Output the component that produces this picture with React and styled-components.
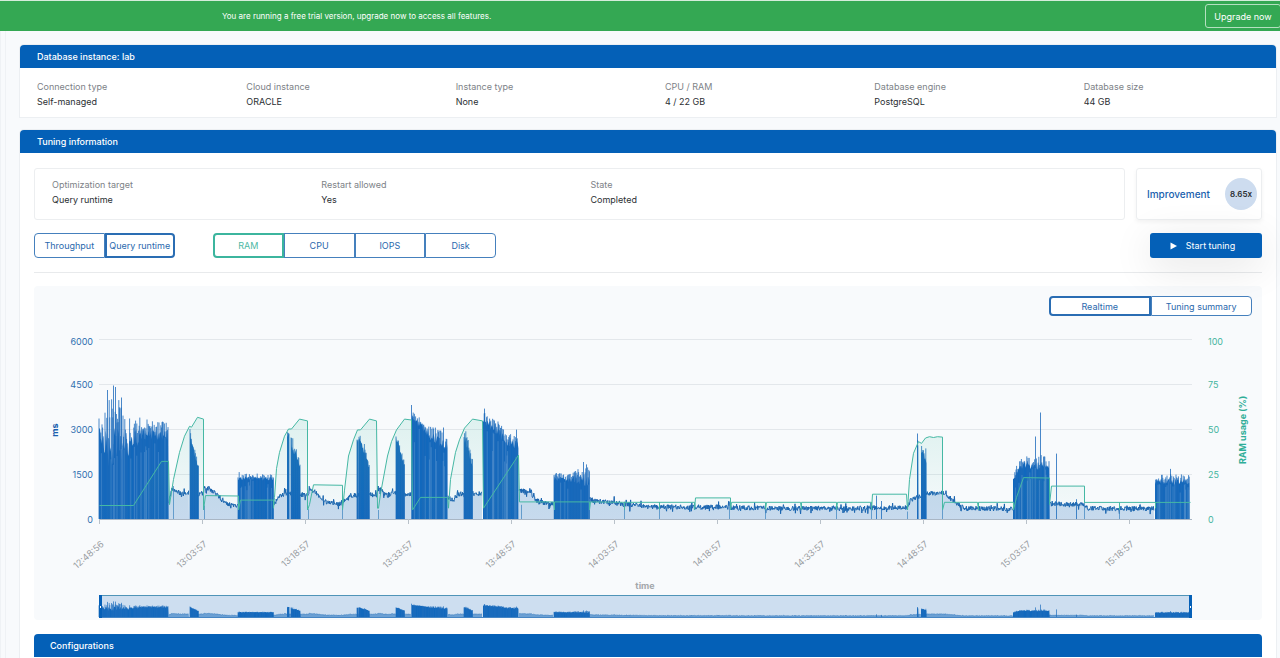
import React, { useState } from "react";

import styled, { createGlobalStyle } from "styled-components";

const instanceInfo = [
  ["Connection type", "Self-managed"],
  ["Cloud instance", "ORACLE"],
  ["Instance type", "None"],
  ["CPU / RAM", "4 / 22 GB"],
  ["Database engine", "PostgreSQL"],
  ["Database size", "44 GB"],
];

const tuningInfo = [
  ["Optimization target", "Query runtime"],
  ["Restart allowed", "Yes"],
  ["State", "Completed"],
];

const timeLabels = [
  "12:48:56",
  "13:03:57",
  "13:18:57",
  "13:33:57",
  "13:48:57",
  "14:03:57",
  "14:18:57",
  "14:33:57",
  "14:48:57",
  "15:03:57",
  "15:18:57",
];

// chart geometry
const LEFT = 99;
const RIGHT = 1192;
const BASE = 203;
const PLOT_HEIGHT = 180;
const BRUSH_TOP = 280;
const BRUSH_BASE = 301;

// calm parts of the run: [x, ms] points, each list is one continuous piece
const calm = [
  [[169, 600], [172, 1000], [177, 900], [181, 830], [189, 850]],
  [[198, 830], [203, 850], [204, 1080], [210, 1000], [218, 780], [228, 480], [238, 430]],
  [[273, 420], [277, 650], [281, 780], [287, 880]],
  [[289, 880], [291, 850]],
  [[300, 820], [308, 800], [309, 1020], [315, 900], [327, 530], [342, 500], [345, 650], [350, 780], [359, 800]],
  [[369, 800], [377, 820], [378, 1040], [384, 880], [388, 760], [393, 920], [396, 850]],
  [[404, 830], [411, 830]],
  [[448, 740], [452, 630], [460, 850], [464, 830]],
  [[472, 830], [482, 850]],
  [[519, 950], [530, 920], [536, 620], [545, 530], [553, 490]],
  [[589, 660], [600, 580], [620, 510], [640, 450], [652, 400], [729, 400], [732, 370], [840, 345], [870, 370], [907, 380], [911, 650], [917, 720]],
  [[918, 740], [921, 780]],
  [[926, 850], [942, 880], [950, 700], [960, 430], [966, 350], [1013, 340]],
  [[1049, 500], [1084, 490], [1088, 360], [1154, 340]],
];

// busy parts: points are [x, body ms, spike ms]
const bursts = [
  [[99, 2900, 3350], [104, 2600, 3250], [105, 2400, 4100], [109, 2400, 4100], [116, 2400, 4200], [119, 2500, 4000], [125, 2450, 3600], [132, 2500, 3500], [138, 2650, 3600], [142, 2850, 3350], [168, 2800, 3250]],
  [[190, 2800, 3050], [193, 2400, 2550], [198, 1750, 1900]],
  [[238, 1370, 1600], [241, 1350, 1520], [273, 1350, 1520]],
  [[287, 2800, 3000], [289, 2800, 3000]],
  [[291, 2500, 2850], [295, 2200, 2500], [300, 1700, 1950]],
  [[357, 2600, 2750], [358, 2600, 2750]],
  [[359, 2700, 2850], [363, 2400, 2700], [369, 1700, 1850]],
  [[396, 2700, 2850], [400, 2300, 2500], [404, 1800, 2000]],
  [[412, 3350, 3750], [415, 3250, 3500], [425, 3000, 3400], [432, 2700, 3150], [447, 2450, 2850]],
  [[464, 2700, 3100], [467, 2500, 2850], [472, 1800, 2000]],
  [[483, 3300, 3650], [486, 3200, 3450], [497, 2950, 3300], [507, 2550, 2900], [518, 2450, 2850]],
  [[554, 1350, 1550], [570, 1300, 1500], [580, 1300, 1750], [589, 1300, 1850]],
  [[917, 2400, 2800], [918, 2400, 2700]],
  [[921, 2300, 2650], [923, 2150, 2450], [926, 2000, 2400]],
  [[1013, 1280, 1400], [1017, 1550, 1850], [1024, 1800, 2150], [1049, 1780, 2150]],
  [[1155, 1250, 1450], [1170, 1250, 1500], [1189, 1250, 1480]],
];

const peaks = [
  [107, 4300], [113, 4450], [115, 4400], [121, 4050], [411, 3800], [484, 3680],
  [443, 3050], [516, 2980], [583, 1900], [586, 1820], [917, 2850], [1035, 2750],
  [1040, 3550], [1056, 2180], [1170, 1670], [876, 780], [881, 600], [1076, 660],
];

const drops = [173, 204, 308, 342, 378, 521, 624, 659, 729, 765, 836, 871, 907, 942, 1084, 1119];

// [x, percent]
const ram = [
  [99, 7.5], [133, 7.5], [161, 32], [168, 32], [169, 8], [173, 22], [179, 37], [184, 46],
  [189, 51.5], [191, 51], [197, 56.5], [203, 55.5], [203, 5], [205, 13], [238, 12.8],
  [238, 5], [240, 10.5], [273, 10.5], [273, 6], [274, 12], [276, 28], [279, 37],
  [284, 46], [288, 50], [291, 50], [299, 55.5], [307, 54.5], [307, 5], [309, 8],
  [313, 19], [342, 18.7], [342, 5], [344, 16], [348, 35], [353, 44], [357, 49.5],
  [360, 49.5], [369, 55.5], [376, 54.5], [377, 6], [378, 6], [380, 14], [387, 35],
  [391, 43], [396, 49.5], [404, 55.5], [411, 55], [412, 5], [420, 12], [447, 12],
  [448, 6], [450, 22], [455, 37], [459, 44], [464, 50.5], [472, 55.5], [482, 54.5],
  [483, 6], [518, 35.5], [519, 9.5], [553, 9.5], [554, 5], [554, 9.5], [589, 9.5],
  [589, 5], [590, 9.5], [624, 9.3], [624, 5], [624, 9.3], [659, 9.3], [659, 5],
  [659, 9.3], [694, 9.3], [694, 5], [695, 11.7], [730, 11.7], [730, 5], [731, 9.3],
  [765, 9.3], [765, 5], [766, 9.3], [800, 9.3], [801, 5], [801, 9.3], [836, 9.3],
  [836, 5], [837, 9.3], [871, 9.3], [871, 5], [872, 13.8], [906, 13.8], [907, 5],
  [909, 22], [913, 36.5], [918, 43], [921, 42], [925, 45], [929, 45.7], [933, 45.3],
  [937, 45.7], [942, 45.5], [942, 5], [944, 9.3], [977, 9.3], [978, 5], [978, 9.3],
  [1013, 9.3], [1013, 5], [1016, 12], [1023, 23], [1049, 22.8], [1049, 8],
  [1051, 18.3], [1084, 18.3], [1084, 9.2], [1119, 9.2], [1119, 5], [1119, 9.2],
  [1155, 9.2], [1155, 6], [1155, 9.2], [1190, 9.2],
];

// seeded so that every render draws the same samples
const createRandom = (seed) => {
  let value = seed;
  return () => {
    value = (value * 16807) % 2147483647;
    return value / 2147483647;
  };
};

const valueAt = (points, x, index) => {
  for (let i = 1; i < points.length; i++) {
    const a = points[i - 1];
    const b = points[i];
    if (x <= b[0]) {
      const part = (x - a[0]) / (b[0] - a[0] || 1);
      return a[index] + (b[index] - a[index]) * part;
    }
  }
  return points[points.length - 1][index];
};

const buildSeries = (base, height) => {
  const random = createRandom(4711);
  const y = (ms) => (base - (ms / 6000) * height).toFixed(1);
  let area = "";
  let line = "";
  let body = "";
  let spikes = "";
  let gaps = "";

  calm.forEach((points) => {
    const start = points[0][0];
    const end = points[points.length - 1][0];
    let path = "";
    for (let x = start; x <= end; x += 0.4) {
      let noise = (random() - 0.5) * 160;
      if (random() > 0.9) noise *= x > 589 && x < 640 ? 3.2 : 2.4;
      path += `${path ? "L" : "M"}${x.toFixed(1)} ${y(valueAt(points, x, 1) + noise)}`;
    }
    line += path;
    area += `${path}L${end} ${base}L${start} ${base}Z`;
  });

  bursts.forEach((points) => {
    const start = points[0][0];
    const end = points[points.length - 1][0] + 0.5;
    body += `M${start} ${base}`;
    for (let x = start; x <= end; x += 0.6) {
      const low = valueAt(points, x, 1);
      const high = valueAt(points, x, 2);
      body += `L${x.toFixed(1)} ${y(low + (random() - 0.5) * (high - low) * 0.8)}`;
      if (random() > 0.4) {
        const top = low + (high - low) * Math.pow(random(), 0.8);
        spikes += `M${x.toFixed(1)} ${base}V${y(top)}`;
      }
      if (end - start > 20 && random() > 0.8) {
        gaps += `M${x.toFixed(1)} ${base}V${y(low * (0.7 + random() * 0.3))}`;
      }
    }
    body += `L${end} ${base}Z`;
  });

  peaks.forEach(([x, ms]) => {
    spikes += `M${x + 0.5} ${base}V${y(ms)}`;
  });

  const dropLines = drops.map((x) => `M${x + 0.5} ${base}V${y(valueAt(ram, x, 1) * 50)}`).join("");

  return { area, line, body, spikes, gaps, dropLines };
};

const main = buildSeries(BASE, PLOT_HEIGHT);
const mini = buildSeries(BRUSH_BASE, 21);

const ramLine = ram
  .map(([x, value], i) => `${i ? "L" : "M"}${x + 0.5} ${(BASE - value * 1.8).toFixed(1)}`)
  .join("");

const Chart = () => (
  <ChartSvg viewBox="34 0 1228 304" role="img" aria-label="Query runtime and RAM usage">
    <defs>
      <linearGradient id="ramFill" x1="0" y1="0" x2="0" y2="1">
        <stop offset="0" stopColor="#3cb9a0" stopOpacity="0.14" />
        <stop offset="1" stopColor="#3cb9a0" stopOpacity="0.01" />
      </linearGradient>
    </defs>

    {[0, 1, 2, 3, 4].map((step) => {
      const y = BASE - step * 45;
      return (
        <g key={step}>
          <line x1={LEFT} x2={RIGHT} y1={y + 0.5} y2={y + 0.5} stroke="#e3e7eb" />
          <AxisText x="93" y={step === 4 ? y + 6 : y + 4} textAnchor="end">
            {step * 1500}
          </AxisText>
          <AxisText x="1208" y={step === 4 ? y + 6 : y + 4} $green>
            {step * 25}
          </AxisText>
        </g>
      );
    })}

    <path d={main.area} fill="#c8daee" />
    <path d={main.line} fill="none" stroke="#1a64b0" strokeWidth="1" />
    <path d={main.body} fill="#1168bd" />
    <path d={main.spikes} stroke="#1c6abb" strokeWidth="0.8" />
    <path d={main.gaps} stroke="#8fb9e2" strokeWidth="0.3" />
    <path d={main.dropLines} stroke="#4a8bc4" strokeWidth="0.8" />
    <path d={`${ramLine}V${BASE}H${LEFT}Z`} fill="url(#ramFill)" />
    <path d={ramLine} fill="none" stroke="#45b8a4" strokeWidth="1" />

    <line x1={LEFT} x2={RIGHT} y1={BASE + 0.5} y2={BASE + 0.5} stroke="#a9b6c4" />
    {timeLabels.map((label, i) => {
      const x = LEFT + 0.5 + i * 103;
      return (
        <g key={label}>
          <line x1={x} x2={x} y1={BASE} y2={BASE + 5} stroke="#b9c1c9" />
          <TimeText textAnchor="end" transform={`translate(${x + 5} 229) rotate(-41)`}>
            {label}
          </TimeText>
        </g>
      );
    })}

    <AxisTitle textAnchor="middle" transform="translate(58 114) rotate(-90)">
      ms
    </AxisTitle>
    <AxisTitle textAnchor="middle" transform="translate(1246 114) rotate(-90)" $color="#2fae98">
      RAM usage (%)
    </AxisTitle>
    <AxisTitle x="645" y="273" textAnchor="middle" $color="#a3a7ab">
      time
    </AxisTitle>

    <rect x={LEFT} y={BRUSH_TOP} width={RIGHT - LEFT} height="22" fill="#cddef0" />
    <path d={mini.area} fill="#6a9fd3" />
    <path d={mini.line} fill="none" stroke="#2b73b8" strokeWidth="0.5" />
    <path d={mini.body} fill="#1168bd" />
    <path d={mini.spikes} stroke="#1c6dbd" strokeWidth="0.7" />
    <line x1={LEFT} x2={RIGHT} y1={BRUSH_TOP - 0.5} y2={BRUSH_TOP - 0.5} stroke="#4f94b8" />
    <line x1={LEFT} x2={RIGHT} y1={BRUSH_BASE + 0.5} y2={BRUSH_BASE + 0.5} stroke="#4585c4" />
    {[LEFT, RIGHT - 3].map((x) => (
      <g key={x}>
        <rect x={x} y={BRUSH_TOP - 1} width="3" height="23" fill="#0660b7" />
        <rect x={x + 1} y={BRUSH_TOP + 10} width="1" height="2" fill="#ffffff" />
      </g>
    ))}
  </ChartSvg>
);

const Toggle = ({ options, value, onChange, label, ...rest }) => (
  <ToggleGroup role="group" aria-label={label} {...rest}>
    {options.map((option) => (
      <ToggleButton
        key={option}
        type="button"
        aria-pressed={option === value}
        $active={option === value}
        $green={option === "RAM" && option === value}
        onClick={() => onChange(option)}
      >
        {option}
      </ToggleButton>
    ))}
  </ToggleGroup>
);

const Info = ({ items }) =>
  items.map(([label, value]) => (
    <InfoItem key={label}>
      <dt>{label}</dt>
      <dd>{value}</dd>
    </InfoItem>
  ));

const App = () => {
  const [target, setTarget] = useState("Query runtime");
  const [metric, setMetric] = useState("RAM");
  const [view, setView] = useState("Realtime");

  return (
    <>
      <GlobalStyle />
      <Page>
        <Banner>
          <p>You are running a free trial version, upgrade now to access all features.</p>
          <UpgradeButton type="button">Upgrade now</UpgradeButton>
        </Banner>
        <Content>
          <Rail />
          <Main>
            <Panel>
              <PanelTitle>Database instance: lab</PanelTitle>
              <InstanceInfo>
                <Info items={instanceInfo} />
              </InstanceInfo>
            </Panel>
            <Panel $grow>
              <PanelTitle>Tuning information</PanelTitle>
              <TuningBody>
                <Summary>
                  <TuningInfo>
                    <Info items={tuningInfo} />
                  </TuningInfo>
                  <Improvement>
                    <span>Improvement</span>
                    <Score>8.65x</Score>
                  </Improvement>
                </Summary>
                <Toolbar>
                  <Toggle
                    label="Target"
                    options={["Throughput", "Query runtime"]}
                    value={target}
                    onChange={setTarget}
                    $width={141}
                  />
                  <Toggle
                    label="Metric"
                    options={["RAM", "CPU", "IOPS", "Disk"]}
                    value={metric}
                    onChange={setMetric}
                    $width={283}
                  />
                  <StartButton type="button">
                    <svg width="7" height="8" viewBox="0 0 7 8" aria-hidden="true">
                      <path d="M0.5 0.5L7 4L0.5 7.5Z" fill="#ffffff" />
                    </svg>
                    Start tuning
                  </StartButton>
                </Toolbar>
                <ChartPanel>
                  <ChartToolbar>
                    <Toggle
                      label="View"
                      options={["Realtime", "Tuning summary"]}
                      value={view}
                      onChange={setView}
                      $width={203}
                      $small
                    />
                  </ChartToolbar>
                  <Chart />
                </ChartPanel>
                <PanelTitle $inset>Configurations</PanelTitle>
              </TuningBody>
            </Panel>
          </Main>
        </Content>
      </Page>
    </>
  );
};

export default App;

const GlobalStyle = createGlobalStyle`
  * {
    box-sizing: border-box;
  }

  body {
    margin: 0;
    background-color: #f8fafc;
    color: #2b2f33;
    font-family: Inter, "Liberation Sans", sans-serif;
    font-size: 9px;
    line-height: 15px;
  }

  h2, p, dl, dd {
    margin: 0;
  }

  button {
    padding: 0;
    font-family: inherit;
    font-size: 9px;
    cursor: pointer;
  }
`;

const Page = styled.div`
  display: flex;
  flex-direction: column;
  min-height: 100vh;
  overflow: hidden;
`;

const Banner = styled.div`
  display: flex;
  align-items: center;
  justify-content: space-between;
  height: 31px;
  padding-left: 222px;
  border-top: 1px solid #d5eddb;
  background-color: #34a853;
  color: #ffffff;
  font-size: 8px;
`;

const UpgradeButton = styled.button`
  width: 76px;
  height: 24px;
  margin-right: -1px;
  border: 1px solid #b5e0c0;
  border-radius: 3px;
  background-color: transparent;
  color: #ffffff;
`;

const Content = styled.div`
  display: flex;
  flex: 1;
`;

const Rail = styled.div`
  width: 6px;
  border-left: 1px solid #eff2f5;
  border-right: 1px solid #eff2f5;
`;

const Main = styled.main`
  display: flex;
  flex-direction: column;
  flex: 1;
  gap: 13px;
  padding: 14px 4px 0 14px;
`;

const Panel = styled.section`
  flex: ${(props) => (props.$grow ? "1" : "none")};
  border-radius: 4px 4px 0 0;
  background-color: #ffffff;
  box-shadow: 0 0 0 1px #eceff2;
`;

const PanelTitle = styled.h2`
  height: 23px;
  padding: 0 ${(props) => (props.$inset ? "16px" : "17px")};
  border-radius: 4px 4px 0 0;
  background-color: #0460b7;
  color: #ffffff;
  font-size: 9px;
  font-weight: 500;
  line-height: 23px;
`;

const InstanceInfo = styled.dl`
  display: grid;
  grid-template-columns: repeat(6, 1fr);
  padding: 11px 0 8px;
`;

const InfoItem = styled.div`
  padding-left: 17px;

  dt {
    color: #7d8287;
  }
`;

const TuningBody = styled.div`
  padding: 15px 14px 0;
`;

const Summary = styled.div`
  display: flex;
  gap: 11px;
`;

const TuningInfo = styled.dl`
  display: grid;
  grid-template-columns: repeat(4, 1fr);
  flex: 1;
  height: 52px;
  padding: 8px 12px 0 0;
  border: 1px solid #eceef0;
  border-radius: 3px;
`;

const Improvement = styled.div`
  display: flex;
  align-items: center;
  justify-content: space-between;
  width: 126px;
  padding: 0 4px 0 10px;
  border: 1px solid #eceef0;
  border-radius: 3px;
  box-shadow: 0 2px 4px rgba(0, 0, 0, 0.05);
  color: #1a5fae;
  font-size: 10px;
  font-weight: 500;
`;

const Score = styled.strong`
  width: 32px;
  height: 32px;
  border-radius: 50%;
  background-color: #cddcef;
  color: #2b2f33;
  font-size: 8px;
  font-weight: 600;
  line-height: 32px;
  text-align: center;
`;

const Toolbar = styled.div`
  display: flex;
  gap: 38px;
  padding: 13px 0 14px;
  border-bottom: 1px solid #e8eaec;
`;

const ToggleGroup = styled.div`
  display: grid;
  grid-auto-flow: column;
  grid-auto-columns: 1fr;
  width: ${(props) => props.$width}px;
  height: ${(props) => (props.$small ? "20px" : "25px")};
`;

const ToggleButton = styled.button`
  min-width: 0;
  border: ${(props) => (props.$active ? "2px" : "1px")} solid
    ${(props) => (props.$green ? "#3cb59e" : props.$active ? "#2a6db3" : "#4580bd")};
  background-color: #ffffff;
  color: ${(props) => (props.$green ? "#4db8a4" : "#2a69ad")};
  white-space: nowrap;

  &:first-child {
    border-radius: 4px 0 0 4px;
  }

  &:last-child {
    border-radius: 0 4px 4px 0;
  }
`;

const StartButton = styled.button`
  display: flex;
  align-items: center;
  justify-content: center;
  gap: 9px;
  width: 112px;
  height: 25px;
  margin-left: auto;
  padding-right: 7px;
  border: 0;
  border-radius: 3px;
  background-color: #0460b7;
  box-shadow: 0 8px 40px rgba(0, 0, 0, 0.12);
  color: #ffffff;
`;

const ChartPanel = styled.div`
  margin: 13px 0 14px;
  border-radius: 4px;
  background-color: #f8fafc;
`;

const ChartToolbar = styled.div`
  display: flex;
  justify-content: flex-end;
  padding: 10px 10px 0;
`;

const ChartSvg = styled.svg`
  display: block;
  width: 100%;
  height: auto;
`;

const AxisText = styled.text`
  fill: ${(props) => (props.$green ? "#45b5a0" : "#2f6fb0")};
  font-size: 9px;
`;

const TimeText = styled.text`
  fill: #9a9ea3;
  font-size: 9px;
`;

const AxisTitle = styled.text`
  fill: ${(props) => props.$color || "#1a5fae"};
  font-size: 9px;
  font-weight: 700;
`;
